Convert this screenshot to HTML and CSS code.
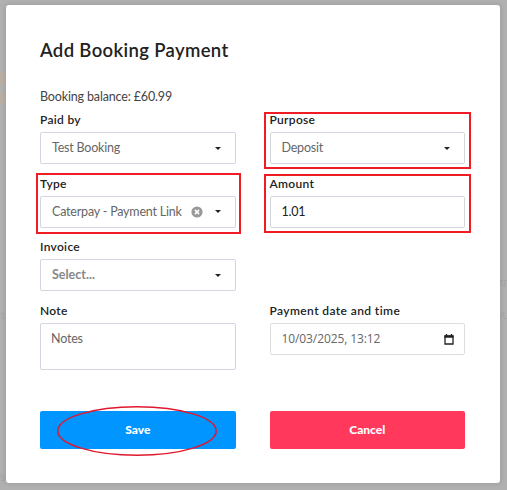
FILE: index.html
```html
<!DOCTYPE html>
<html lang="en">
  <head>
    <meta charset="UTF-8" />
    <meta name="viewport" content="width=device-width, initial-scale=1.0" />
    <title>Add Booking Payment</title>
    <link rel="stylesheet" href="styles.css">
  </head>
  <body>
    <div class="backdrop">
      <div class="stripe stripe-one"></div>
      <div class="stripe stripe-two"></div>
      <span class="ghost ghost-at">AT</span>
      <span class="ghost ghost-u">/U</span>
      <span class="ghost ghost-one">1</span>
      <span class="ghost ghost-s">S</span>
    </div>
    <form class="modal">
      <h1>Add Booking Payment</h1>
      <p class="balance">Booking balance: £60.99</p>
      <div class="fields">
        <div class="field">
          <label>Paid by</label>
          <div class="control">
            <span class="value">Test Booking</span>
            <span class="arrow"></span>
          </div>
        </div>
        <div class="field">
          <label>Purpose</label>
          <div class="control">
            <span class="value">Deposit</span>
            <span class="arrow"></span>
          </div>
          <div class="mark mark-purpose"></div>
        </div>
        <div class="field">
          <label>Type</label>
          <div class="control">
            <span class="value">Caterpay - Payment Link</span>
            <svg class="clear" viewBox="0 0 12 12">
              <circle cx="6" cy="6" r="5.6" fill="#999" />
              <path d="M3.9 3.9l4.2 4.2M8.1 3.9L3.9 8.1" stroke="#fff" stroke-width="1.5" />
            </svg>
            <span class="arrow"></span>
          </div>
          <div class="mark mark-type"></div>
        </div>
        <div class="field">
          <label>Amount</label>
          <div class="control">
            <span class="value value-amount">1.01</span>
          </div>
          <div class="mark mark-amount"></div>
        </div>
        <div class="field wide">
          <label>Invoice</label>
          <div class="control">
            <span class="value value-select">Select...</span>
            <span class="arrow"></span>
          </div>
        </div>
        <div class="field">
          <label>Note</label>
          <div class="control notes">
            <span class="value">Notes</span>
          </div>
        </div>
        <div class="field">
          <label class="label-date">Payment date and time</label>
          <div class="control date">
            <span class="value value-date">10/03/2025, 13:12</span>
            <svg class="calendar" viewBox="0 0 10 11">
              <path d="M1 2h8v8H1z" fill="none" stroke="#222" stroke-width="1.3" />
              <path d="M.4 1.4h9.2v2.4H.4zM1.8 0h1.4v2H1.8zM6.8 0h1.4v2H6.8z" fill="#222" />
            </svg>
          </div>
        </div>
      </div>
      <div class="buttons">
        <button type="button" class="save">
          Save
          <svg class="circle" viewBox="0 0 160 50">
            <ellipse cx="80" cy="25" rx="79.2" ry="24.2" fill="none" stroke="#e0182d" stroke-width="1.5" />
          </svg>
        </button>
        <button type="button" class="cancel">Cancel</button>
      </div>
    </form>
  </body>
</html>
```
FILE: styles.css
```css
* {
  box-sizing: border-box;
}
body {
  margin: 0;
  height: 490px;
  padding: 5px 7.5px 7px 6px;
  overflow: hidden;
  background-color: #b0b0b0;
  font-family: Lato, "Open Sans", sans-serif;
  font-size: 12px;
  color: #222;
}
.stripe {
  position: absolute;
  left: 0;
  width: 6px;
  background-color: #b8b0a3;
}
.stripe-one {
  top: 72px;
  height: 14px;
}
.stripe-two {
  top: 92px;
  height: 12px;
}
.ghost {
  position: absolute;
  font-size: 10px;
  line-height: 12px;
  color: #a5a5a5;
}
.ghost-at {
  left: 497px;
  top: 277px;
  letter-spacing: -1px;
}
.ghost-u {
  left: 499px;
  top: 309px;
  letter-spacing: -1px;
}
.ghost-one {
  left: 0;
  top: 309px;
}
.ghost-s {
  left: 0;
  top: 471px;
}
.modal {
  position: relative;
  height: 478px;
  padding: 33px 34px 0;
  background-color: #fff;
  border-radius: 3px;
  box-shadow: 0 0 5px rgba(0, 0, 0, 0.15);
}
h1 {
  margin: 0;
  font-size: 18.5px;
  line-height: 24px;
  font-weight: 600;
  letter-spacing: 0.35px;
  white-space: nowrap;
}
.balance {
  margin: 27px 0 0;
  font-size: 12.5px;
  line-height: 16px;
  letter-spacing: -0.15px;
  color: #444;
}
.fields {
  display: grid;
  grid-template-columns: 195.5px 195.5px;
  column-gap: 34px;
  row-gap: 11.7px;
  margin-top: 7px;
}
.field {
  position: relative;
}
.wide {
  grid-column: 1 / 3;
  width: 195.5px;
}
label {
  display: block;
  height: 20px;
  line-height: 16px;
  font-weight: 600;
  letter-spacing: 0.3px;
  white-space: nowrap;
}
.label-date {
  letter-spacing: 0.4px;
}
.control {
  display: flex;
  align-items: center;
  height: 32px;
  padding: 0 14px 0 11px;
  border: 1px solid #d5d5e2;
  border-radius: 2px;
}
.value {
  flex: 1;
  font-size: 12.5px;
  line-height: 16px;
  letter-spacing: -0.2px;
  white-space: nowrap;
  color: #666;
}
.arrow {
  width: 0;
  border: 3px solid transparent;
  border-top-color: #222;
  border-bottom: 0;
}
.clear {
  width: 12px;
  height: 12px;
  margin-right: 12px;
}
.value-amount {
  color: #222;
}
.value-select {
  font-weight: 700;
  letter-spacing: 0;
  color: #888;
}
.notes {
  align-items: flex-start;
  height: 47px;
  padding-top: 7px;
  padding-left: 10px;
}
.date {
  padding-right: 10px;
  border-color: #dedede;
}
.value-date {
  font-family: "Open Sans", sans-serif;
  font-size: 12px;
  letter-spacing: -0.1px;
}
.calendar {
  width: 10px;
  height: 11px;
}
.mark {
  position: absolute;
  border: 2px solid #ef1c24;
}
.mark-purpose {
  inset: 0 -6px -5px -5.5px;
}
.mark-type {
  inset: -3px -5px -6px -4px;
}
.mark-amount {
  inset: -2px -6px -5px -5.5px;
}
.buttons {
  display: flex;
  gap: 34px;
  margin-top: 41px;
}
button {
  position: relative;
  width: 195.5px;
  height: 38px;
  padding: 0 0 2px;
  border: none;
  border-radius: 2px;
  font-family: inherit;
  font-size: 12px;
  font-weight: 900;
  color: #fff;
}
.save {
  background-color: #0095ff;
}
.cancel {
  background-color: #ff385c;
}
.circle {
  position: absolute;
  left: 17px;
  top: -5px;
  width: 160px;
  height: 50px;
}
```
